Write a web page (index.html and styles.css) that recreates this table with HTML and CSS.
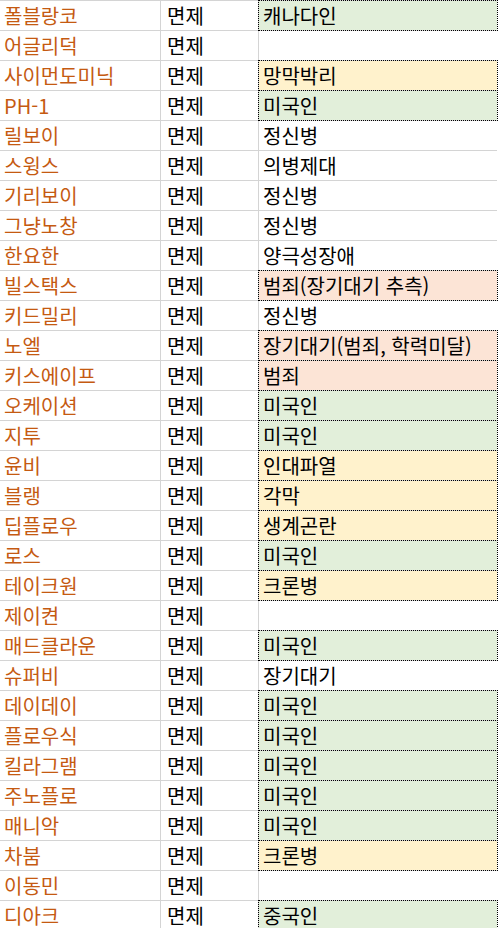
FILE: index.html
```html
<!DOCTYPE html>
<html lang="ko">
<head>
<meta charset="utf-8">
<link rel="stylesheet" href="styles.css">
</head>
<body>
<div class="sheet">
  <div class="c name">폴블랑코</div><div class="c mid">면제</div><div class="c note green">캐나다인</div>
  <div class="c name">어글리덕</div><div class="c mid">면제</div><div class="c note"></div>
  <div class="c name">사이먼도미닉</div><div class="c mid">면제</div><div class="c note yellow">망막박리</div>
  <div class="c name">PH-1</div><div class="c mid">면제</div><div class="c note green">미국인</div>
  <div class="c name">릴보이</div><div class="c mid">면제</div><div class="c note">정신병</div>
  <div class="c name">스윙스</div><div class="c mid">면제</div><div class="c note">의병제대</div>
  <div class="c name">기리보이</div><div class="c mid">면제</div><div class="c note">정신병</div>
  <div class="c name">그냥노창</div><div class="c mid">면제</div><div class="c note">정신병</div>
  <div class="c name">한요한</div><div class="c mid">면제</div><div class="c note">양극성장애</div>
  <div class="c name">빌스택스</div><div class="c mid">면제</div><div class="c note peach">범죄(장기대기 추측)</div>
  <div class="c name">키드밀리</div><div class="c mid">면제</div><div class="c note">정신병</div>
  <div class="c name">노엘</div><div class="c mid">면제</div><div class="c note peach">장기대기(범죄, 학력미달)</div>
  <div class="c name">키스에이프</div><div class="c mid">면제</div><div class="c note peach">범죄</div>
  <div class="c name">오케이션</div><div class="c mid">면제</div><div class="c note green">미국인</div>
  <div class="c name">지투</div><div class="c mid">면제</div><div class="c note green">미국인</div>
  <div class="c name">윤비</div><div class="c mid">면제</div><div class="c note yellow">인대파열</div>
  <div class="c name">블랭</div><div class="c mid">면제</div><div class="c note yellow">각막</div>
  <div class="c name">딥플로우</div><div class="c mid">면제</div><div class="c note yellow">생계곤란</div>
  <div class="c name">로스</div><div class="c mid">면제</div><div class="c note green">미국인</div>
  <div class="c name">테이크원</div><div class="c mid">면제</div><div class="c note yellow">크론병</div>
  <div class="c name">제이켠</div><div class="c mid">면제</div><div class="c note"></div>
  <div class="c name">매드클라운</div><div class="c mid">면제</div><div class="c note green">미국인</div>
  <div class="c name">슈퍼비</div><div class="c mid">면제</div><div class="c note">장기대기</div>
  <div class="c name">데이데이</div><div class="c mid">면제</div><div class="c note green">미국인</div>
  <div class="c name">플로우식</div><div class="c mid">면제</div><div class="c note green">미국인</div>
  <div class="c name">킬라그램</div><div class="c mid">면제</div><div class="c note green">미국인</div>
  <div class="c name">주노플로</div><div class="c mid">면제</div><div class="c note green">미국인</div>
  <div class="c name">매니악</div><div class="c mid">면제</div><div class="c note green">미국인</div>
  <div class="c name">차붐</div><div class="c mid">면제</div><div class="c note yellow">크론병</div>
  <div class="c name">이동민</div><div class="c mid">면제</div><div class="c note"></div>
  <div class="c name">디아크</div><div class="c mid">면제</div><div class="c note green">중국인</div>
</div>
</body>
</html>
```

FILE: styles.css
```css
html, body {
  margin: 0;
  padding: 0;
  background: #ffffff;
}

.sheet {
  display: grid;
  grid-template-columns: 160px 97px 238px;
  grid-auto-rows: 29px;
  gap: 1px;
  padding: 1px 1px 0 0;
  width: 496px;
  background: #d4d4d4;
  font-family: "Noto Sans CJK KR", "Noto Sans", sans-serif;
  font-size: 20px;
}

.c {
  background: #ffffff;
  line-height: 29px;
  white-space: nowrap;
  overflow: visible;
  color: #000000;
}

.name {
  color: #c55a11;
  padding-left: 4px;
}

.mid {
  padding-left: 6px;
}

.note {
  padding-left: 4px;
}

.green,
.yellow,
.peach {
  outline: 1px dotted #000000;
}

.green { background: #e2efda; }
.yellow { background: #fff2cc; }
.peach { background: #fce4d6; }
```
